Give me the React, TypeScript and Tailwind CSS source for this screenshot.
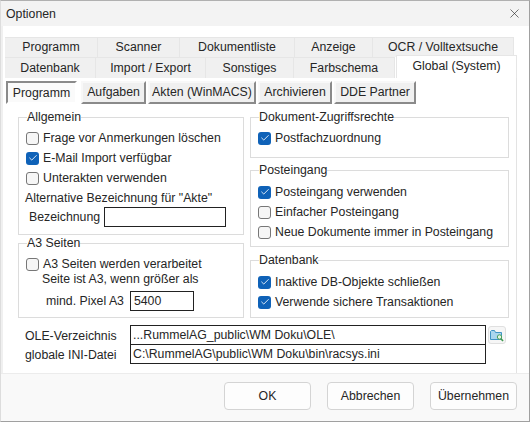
import type { ReactNode } from 'react'
import { Check, X } from 'lucide-react'

const topTabs = [
  { label: 'Programm', width: 'w-[93px]' },
  { label: 'Scanner', width: 'w-[82px]' },
  { label: 'Dokumentliste', width: 'w-[115px]' },
  { label: 'Anzeige', width: 'w-[78px]' },
  { label: 'OCR / Volltextsuche', width: 'w-[141px]' },
]

const bottomTabs = [
  { label: 'Datenbank', width: 'w-[91px]' },
  { label: 'Import / Export', width: 'w-[110px]' },
  { label: 'Sonstiges', width: 'w-[88px]' },
  { label: 'Farbschema', width: 'w-[101px]' },
]

const subTabs = [
  { label: 'Aufgaben', width: 'w-[65px]' },
  { label: 'Akten (WinMACS)', width: 'w-[108px]' },
  { label: 'Archivieren', width: 'w-[74px]' },
  { label: 'DDE Partner', width: 'w-[82px]' },
]

function Tab({ label, width }: { label: string; width: string }) {
  return (
    <div className={`${width} flex items-center justify-center border-r border-t border-[#e6e6e6] bg-[#f0f0f0]`}>
      {label}
    </div>
  )
}

function Group({ title, className, children }: { title: string; className: string; children: ReactNode }) {
  return (
    <fieldset className={`border border-[#dcdcdc] ${className}`}>
      <legend className="ml-px h-[14px] leading-[14px]">{title}</legend>
      {children}
    </fieldset>
  )
}

function CheckRow({ label, checked = false }: { label: string; checked?: boolean }) {
  return (
    <div className="flex h-5 items-center gap-[4px]">
      {checked ? (
        <span className="flex size-[13px] items-center justify-center rounded-[3px] bg-[#0f62b8]">
          <Check size={10} strokeWidth={2} className="text-white" />
        </span>
      ) : (
        <span className="size-[13px] rounded-[3px] border border-[#777777] bg-[#f6f6f6]" />
      )}
      <span>{label}</span>
    </div>
  )
}

function FolderIcon() {
  return (
    <svg width="14" height="13" viewBox="0 0 14 13" fill="none">
      <path d="M0.5 2.5V10.5H11.5V3.5H5.5L4.5 1.5H1.5Z" fill="#a9d6ee" stroke="#3f94c4" />
      <circle cx="9.5" cy="8" r="2.2" fill="#e6f5e4" stroke="#4aa05a" />
      <path d="M11 9.7L13 12" stroke="#3f9a4e" strokeWidth="1.6" />
    </svg>
  )
}

export default function App() {
  return (
    <div className="flex h-[422px] w-[530px] flex-col border-b border-l border-r border-t border-b-[#a0a0a0] border-l-[#dddddd] border-r-[#a0a0a0] border-t-[#b0b0b0] bg-[#f9f9f9] font-['Liberation_Sans',Arial,sans-serif] text-[12.3px] text-[#262626]">
      <div className="flex h-[25px] shrink-0 items-center justify-between bg-[#f3f3f3] pl-[5px] pr-[7px]">
        <span className="pt-px">Optionen</span>
        <X size={15} strokeWidth={1} className="text-[#222222]" />
      </div>

      <div className="flex h-[347px] flex-col border-l-2 border-[#f0f0f0] bg-white pt-[11px]">
        <div className="flex h-5 pl-[2px]">
          {topTabs.map((tab) => (
            <Tab key={tab.label} {...tab} />
          ))}
        </div>
        <div className="flex h-[21px] pl-[2px]">
          {bottomTabs.map((tab) => (
            <Tab key={tab.label} {...tab} />
          ))}
          <div className="-mt-[2px] ml-px flex h-[23px] w-[121px] items-center justify-center border-x border-t border-[#e6e6e6] bg-white pb-[2px]">
            Global (System)
          </div>
        </div>

        <div className="flex h-[295px] w-[514px] flex-col border-r border-[#e3e3e3] bg-white">
          <div className="flex gap-[2px] pl-[3px] pt-[3px]">
            <div className="mr-[2px] flex h-[23px] w-[71px] items-center justify-center border-2 border-b-[#ffffff] border-l-[#8a8a8a] border-r-[#ffffff] border-t-[#8a8a8a] bg-[#fafafa] pt-px">
              Programm
            </div>
            {subTabs.map((tab) => (
              <div
                key={tab.label}
                className={`${tab.width} flex h-[23px] items-center justify-center border-2 border-b-[#8a8a8a] border-l-[#f8f8f8] border-r-[#8a8a8a] border-t-[#f8f8f8] bg-[#f0f0f0]`}
              >
                {tab.label}
              </div>
            ))}
          </div>

          <div className="mt-[6px] flex gap-[6px] pl-[15px]">
            <div className="flex w-[226px] flex-col gap-px">
              <Group title="Allgemein" className="h-[125px] pl-[7px]">
                <div className="pt-[4px]">
                  <CheckRow label="Frage vor Anmerkungen löschen" />
                  <CheckRow label="E-Mail Import verfügbar" checked />
                  <CheckRow label="Unterakten verwenden" />
                  <div className="-ml-px flex h-5 items-center pt-px">Alternative Bezeichnung für "Akte"</div>
                  <div className="-mt-px flex h-5 items-center gap-[4px] pl-[3px]">
                    <span>Bezeichnung</span>
                    <div className="h-5 w-[122px] border border-[#222222] bg-white" />
                  </div>
                </div>
              </Group>
              <Group title="A3 Seiten" className="h-[82px] pl-[7px]">
                <div className="pt-[4px]">
                  <CheckRow label="A3 Seiten werden verarbeitet" />
                  <div className="-mt-[3px] h-[17px] pl-[16px] leading-[17px]">Seite ist A3, wenn größer als</div>
                  <div className="mt-[3px] flex h-5 items-center gap-[6px] pl-[20px]">
                    <span>mind. Pixel A3</span>
                    <div className="flex h-5 w-16 items-center border border-[#222222] bg-white pl-[3px]">5400</div>
                  </div>
                </div>
              </Group>
            </div>

            <div className="flex w-[259px] flex-col">
              <Group title="Dokument-Zugriffsrechte" className="h-[48px] pl-[7px]">
                <div className="pt-[4px]">
                  <CheckRow label="Postfachzuordnung" checked />
                </div>
              </Group>
              <Group title="Posteingang" className="mt-[5px] h-[84px] pl-[7px]">
                <div className="pt-[5px]">
                  <CheckRow label="Posteingang verwenden" checked />
                  <CheckRow label="Einfacher Posteingang" />
                  <CheckRow label="Neue Dokumente immer in Posteingang" />
                </div>
              </Group>
              <Group title="Datenbank" className="mt-[6px] h-[65px] pl-[7px]">
                <div className="pt-[5px]">
                  <CheckRow label="Inaktive DB-Objekte schließen" checked />
                  <CheckRow label="Verwende sichere Transaktionen" checked />
                </div>
              </Group>
            </div>
          </div>

          <div className="mt-[7px] flex pl-[22px]">
            <div className="flex w-[105px] flex-col pt-[2px]">
              <span className="h-[19px] leading-[19px]">OLE-Verzeichnis</span>
              <span className="h-[19px] leading-[19px]">globale INI-Datei</span>
            </div>
            <div className="flex w-[356px] flex-col">
              <div className="flex h-5 items-center border border-[#222222] bg-white pl-[2px]">
                ...RummelAG_public\WM Doku\OLE\
              </div>
              <div className="-mt-px flex h-5 items-center border border-[#222222] bg-white pl-[2px]">
                C:\RummelAG\public\WM Doku\bin\racsys.ini
              </div>
            </div>
            <div className="ml-[2px] mt-px flex size-[18px] items-center justify-center rounded-[3px] border border-[#e0e0e0] bg-[#f6f6f6]">
              <FolderIcon />
            </div>
          </div>
        </div>
      </div>

      <div className="flex flex-1 justify-end gap-4 border-t border-[#ececec] pr-[12px] pt-2">
        {['OK', 'Abbrechen', 'Übernehmen'].map((label) => (
          <button
            key={label}
            type="button"
            className="flex h-[28px] w-[87px] items-center justify-center rounded-[4px] border border-[#d4d4d4] bg-[#fdfdfd]"
          >
            {label}
          </button>
        ))}
      </div>
    </div>
  )
}
